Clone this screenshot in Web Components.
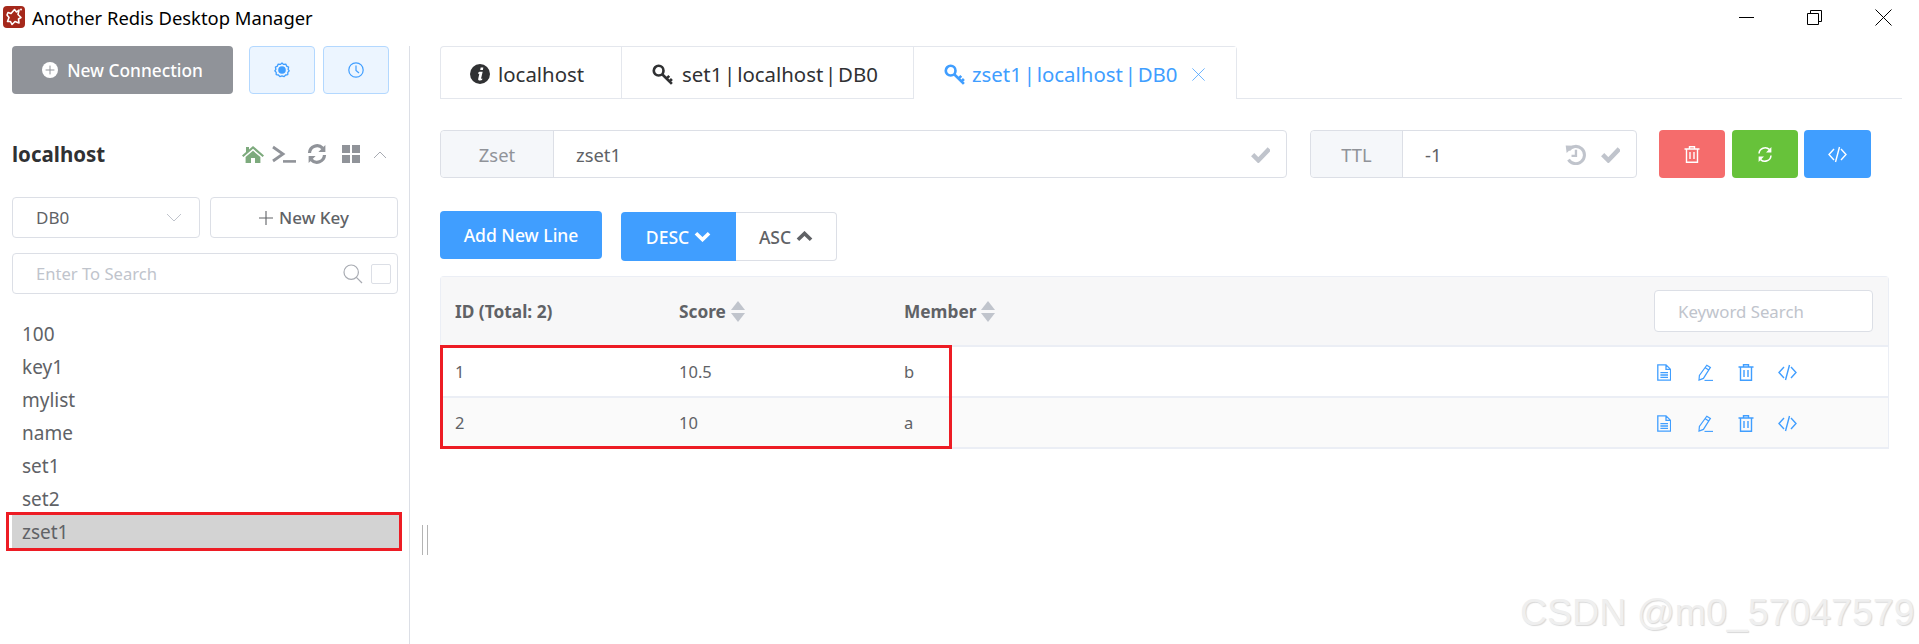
<!DOCTYPE html>
<html>
<head>
<meta charset="utf-8">
<title>Another Redis Desktop Manager</title>
<style>
  html, body { margin: 0; padding: 0; background: #fff; height: 100%; overflow: hidden; }
  body { font-family: "Noto Sans", "Open Sans", sans-serif; color: #606266; }
</style>
</head>
<body>
<app-shell></app-shell>

<script>
const ICONS = {
  logo: '<rect x="0" y="0" width="22" height="22" rx="4" fill="#a5281b"/><path d="M5 6.5 8 7.5 11.5 3.5 13.5 6 16 4 15 8.5 18 11.5 15.5 13 16 17 12 15.5 9 18.5 7.5 15.5 4.5 15.5 6 11.5 4 9Z" fill="none" stroke="#fff" stroke-width="1.6" stroke-linejoin="round"/><circle cx="18" cy="3.5" r="1" fill="#fff"/>',
  plus: '<circle cx="8" cy="8" r="8" fill="#fff"/><path d="M8 3.6v8.8M3.6 8h8.8" stroke="#909399" stroke-width="1"/>',
  gear: '<path d="M8 1.2 9.6 2.6 11.8 2.3 12.6 4.3 14.6 5.3 14.1 7.5 15.2 9 13.8 10.6 13.8 12.8 11.6 13.2 10.1 14.8 8 14.1 5.9 14.8 4.4 13.2 2.2 12.8 2.2 10.6 .8 9 1.9 7.5 1.4 5.3 3.4 4.3 4.2 2.3 6.4 2.6Z" transform="translate(0 -.2)" fill="none" stroke="currentColor" stroke-width="1.3" stroke-linejoin="round"/><circle cx="8" cy="8" r="3.8" fill="currentColor"/>',
  clock: '<circle cx="8" cy="8" r="7.2" fill="none" stroke="currentColor" stroke-width="1.2"/><path d="M8 3.6V8.4L11 11" fill="none" stroke="currentColor" stroke-width="1.2"/>',
  home: '<path d="M11 1 22 10.5 20.6 12 11 3.8 1.4 12 0 10.5 4 7V2h3v2.4Z" fill="currentColor"/><path d="M3.6 12 11 5.8 18.4 12V18H13V13H9V18H3.6Z" fill="currentColor"/>',
  terminal: '<path d="M1 2 11 9 1 16" fill="none" stroke="currentColor" stroke-width="2.8"/><path d="M11 16.4H24" stroke="currentColor" stroke-width="2.6"/>',
  sync: '<path d="M2.5 9A7.6 7.6 0 0 1 15.6 4.2" fill="none" stroke="currentColor" stroke-width="3.2"/><path d="M18.4 1V8H11.4Z" fill="currentColor"/><path d="M17.5 11A7.6 7.6 0 0 1 4.4 15.8" fill="none" stroke="currentColor" stroke-width="3.2"/><path d="M1.6 19V12H8.6Z" fill="currentColor"/>',
  grid: '<path d="M0 0H8V8H0ZM10 0H18V8H10ZM0 10H8V18H0ZM10 10H18V18H10Z" fill="currentColor"/>',
  up: '<path d="M1 8 7 2 13 8" fill="none" stroke="currentColor" stroke-width="1"/>',
  down: '<path d="M1 1 8 8 15 1" fill="none" stroke="currentColor" stroke-width="1"/>',
  add: '<path d="M7 0V14M0 7H14" stroke="currentColor" stroke-width="1.1"/>',
  search: '<circle cx="8.2" cy="8.2" r="7.2" fill="none" stroke="currentColor" stroke-width="1.2"/><path d="M13.4 13.4 19 19" stroke="currentColor" stroke-width="1.2"/>',
  info: '<circle cx="9" cy="9" r="9" fill="currentColor"/><path d="M9.6 3.2h2.4l-.4 2.2H9.2ZM8.6 7h2.8l-1.5 6.2 1.2-.1-.2 1.4c-1.3.4-3.6.6-3.6-.8l1.1-4.9-1 .1.2-1.4Z" fill="#fff"/>',
  key: '<circle cx="6" cy="6" r="4.4" fill="none" stroke="currentColor" stroke-width="2.4"/><path d="M9 9 18 18M13.2 13.2 15.6 10.8M15.8 15.8 18 13.6" fill="none" stroke="currentColor" stroke-width="2.4"/>',
  check: '<path d="M1.4 8 6.2 12.8 15.4 3.2" fill="none" stroke="currentColor" stroke-width="3.8"/>',
  history: '<path d="M3.2 5.2A7.4 7.4 0 1 1 3 13.4" fill="none" stroke="currentColor" stroke-width="2.6"/><path d="M.6 1.2 7.8 1.6 1.4 7.8Z" fill="currentColor"/><path d="M9.4 5V10.2H5.6" fill="none" stroke="currentColor" stroke-width="2"/>',
  trash: '<path d="M5.5 2.5V.8H10.5V2.5M.5 3H15.5M2.5 3V16.2H13.5V3M6 6V13M10 6V13" fill="none" stroke="currentColor" stroke-width="1.4"/>',
  cycle: '<path d="M2 7.5A6.2 6.2 0 0 1 12.4 3.4" fill="none" stroke="currentColor" stroke-width="1.5"/><path d="M14.4 1V6.4H9Z" fill="currentColor"/><path d="M14 9.5A6.2 6.2 0 0 1 3.6 13.6" fill="none" stroke="currentColor" stroke-width="1.5"/><path d="M1.6 16V10.6H7Z" fill="currentColor"/>',
  code: '<path d="M6 3 1 8.5 6 14M13 3 18 8.5 13 14M11.5 1 7.5 16" fill="none" stroke="currentColor" stroke-width="1.4"/>',
  doc: '<path d="M.8.8H9L13.6 5.4V16.2H.8ZM9 .8V5.4H13.6M3.4 8.6H11M3.4 11H11M3.4 13.4H11" fill="none" stroke="currentColor" stroke-width="1.3"/>',
  edit: '<path d="M9.8 1.2 13.4 3.4 6.4 14.4 2 16 2.4 11.4ZM8.2 3.8 11.8 6" fill="none" stroke="currentColor" stroke-width="1.2"/><path d="M7.5 16.4H16" stroke="currentColor" stroke-width="1.1"/>',
  minimize: '<path d="M0 .5H15" stroke="currentColor" stroke-width="1"/>',
  restore: '<path d="M.5 3.5H11.5V14.5H.5ZM3.5 3.5V.5H14.5V11.5H11.5" fill="none" stroke="currentColor" stroke-width="1"/>',
  close: '<path d="M.5.5 16.5 16.5M16.5.5 .5 16.5" stroke="currentColor" stroke-width="1"/>',
  chevDown: '<path d="M1.6 1.8 7 7 12.4 1.8" fill="none" stroke="currentColor" stroke-width="3"/>',
  chevUp: '<path d="M1.6 7.2 7 2 12.4 7.2" fill="none" stroke="currentColor" stroke-width="3"/>'
};

const BOXES = {
  logo: [22, 22], plus: [16, 16], gear: [16, 16], clock: [16, 16], home: [22, 18], terminal: [24, 18],
  sync: [20, 20], grid: [18, 18], up: [14, 9], down: [16, 9], add: [14, 14], search: [20, 20], info: [18, 18],
  key: [19, 19], check: [16, 15], history: [18, 18], trash: [16, 17], cycle: [16, 17], code: [19, 17],
  doc: [14, 17], edit: [16, 17], minimize: [15, 1], restore: [15, 15], close: [17, 17], chevDown: [14, 9], chevUp: [14, 9]
};

class UiIcon extends HTMLElement {
  connectedCallback() {
    const name = this.getAttribute('name');
    const [w, h] = BOXES[name];
    const width = this.getAttribute('w') || w;
    const height = this.getAttribute('h') || h;
    const shadow = this.attachShadow({ mode: 'open' });
    shadow.innerHTML = `
      <style>
        :host { display: inline-flex; flex: none; color: inherit; }
        svg { display: block; }
      </style>
      <svg width="${width}" height="${height}" viewBox="0 0 ${w} ${h}">${ICONS[name]}</svg>
    `;
  }
}

class TitleBar extends HTMLElement {
  constructor() {
    super();
    this.attachShadow({ mode: 'open' }).innerHTML = `
      <style>
        :host { display: flex; align-items: center; height: 46px; padding: 0 27px 12px 3px; box-sizing: border-box; color: #000; }
        .name { margin-left: 7px; font-size: 18.4px; }
        .win { margin-left: auto; display: flex; align-items: center; gap: 53px; }
      </style>
      <ui-icon name="logo"></ui-icon>
      <span class="name">Another Redis Desktop Manager</span>
      <div class="win">
        <ui-icon name="minimize"></ui-icon>
        <ui-icon name="restore"></ui-icon>
        <ui-icon name="close"></ui-icon>
      </div>
    `;
  }
}

class KeyList extends HTMLElement {
  constructor() {
    super();
    this.attachShadow({ mode: 'open' }).innerHTML = `
      <style>
        :host { display: block; margin-top: 23px; margin-right: -1px; }
        .item { height: 33px; line-height: 35px; padding-left: 10px; font-size: 19px; color: #606266; position: relative; }
        .active { background: #d3d3d3; }
        .active::after { content: ""; position: absolute; left: -6px; right: -3px; top: -3px; bottom: -3px; border: 3px solid #ed1c24; box-sizing: border-box; }
      </style>
      ${['100', 'key1', 'mylist', 'name', 'set1', 'set2'].map(k => `<div class="item">${k}</div>`).join('')}
      <div class="item active">zset1</div>
    `;
  }
}

class SideBar extends HTMLElement {
  constructor() {
    super();
    this.attachShadow({ mode: 'open' }).innerHTML = `
      <style>
        :host { display: block; width: 410px; box-sizing: border-box; border-right: 1px solid #dcdfe6; padding-left: 12px; padding-right: 11px; flex: none; font-size: 17px; }
        .top { display: flex; height: 48px; gap: 8px; }
        .new-conn { width: 221px; background: #909399; color: #fff; font-weight: 500; border-radius: 4px; display: flex; align-items: center; justify-content: center; gap: 9px; font-size: 17.3px; margin-right: 8px; }
        .light { width: 66px; background: #ecf5ff; border: 1px solid #b3d8ff; color: #409eff; border-radius: 4px; display: flex; align-items: center; justify-content: center; box-sizing: border-box; }
        .conn { display: flex; align-items: center; height: 42px; margin: 39px 0 22px; }
        .conn b { font-size: 20.5px; color: #303133; font-weight: 700; }
        .ops { margin-left: auto; display: flex; align-items: center; color: #909399; margin-right: 11px; }
        .row { display: flex; gap: 10px; }
        .field { height: 41px; width: 188px; border: 1px solid #dcdfe6; border-radius: 4px; box-sizing: border-box; display: flex; align-items: center; flex: none; }
        .select { padding: 0 17px 0 23px; color: #606266; }
        .select ui-icon { margin-left: auto; color: #c0c4cc; }
        .btn { justify-content: center; gap: 6px; font-weight: 500; color: #606266; }
        .search { width: 386px; margin-top: 15px; padding: 0 6px 0 23px; color: #c0c4cc; font-size: 16.6px; }
        .search ui-icon { margin-left: auto; color: #a8abb2; margin-right: 8px; }
        .cb { width: 20px; height: 20px; border: 1px solid #dcdfe6; border-radius: 2px; box-sizing: border-box; }
      </style>
      <div class="top">
        <div class="new-conn"><ui-icon name="plus"></ui-icon>New Connection</div>
        <div class="light"><ui-icon name="gear"></ui-icon></div>
        <div class="light"><ui-icon name="clock"></ui-icon></div>
      </div>
      <div class="conn">
        <b>localhost</b>
        <div class="ops">
          <ui-icon name="home" style="color:#7daa7d;margin-right:8px"></ui-icon>
          <ui-icon name="terminal" style="margin-right:11px"></ui-icon>
          <ui-icon name="sync" style="margin-right:15px"></ui-icon>
          <ui-icon name="grid" style="margin-right:13px"></ui-icon>
          <ui-icon name="up" style="color:#a8abb2"></ui-icon>
        </div>
      </div>
      <div class="row">
        <div class="field select">DB0<ui-icon name="down"></ui-icon></div>
        <div class="field btn"><ui-icon name="add"></ui-icon>New Key</div>
      </div>
      <div class="field search">Enter To Search<ui-icon name="search"></ui-icon><span class="cb"></span></div>
      <key-list></key-list>
    `;
  }
}

class TabBar extends HTMLElement {
  constructor() {
    super();
    this.attachShadow({ mode: 'open' }).innerHTML = `
      <style>
        :host { display: flex; height: 53px; border-bottom: 1px solid #e4e7ed; box-sizing: border-box; }
        .tabs { display: flex; height: 53px; border: 1px solid #e4e7ed; border-bottom: none; border-radius: 4px 4px 0 0; box-sizing: border-box; }
        .tab { display: flex; align-items: center; gap: 9px; font-size: 20.4px; word-spacing: -3.5px; color: #303133; border-left: 1px solid #e4e7ed; box-sizing: border-box; height: 51px; padding: 3px 0 0 30px; }
        .tab:first-child { border-left: none; padding-left: 29px; gap: 8px; }
        .active { color: #409eff; background: #fff; height: 52px; gap: 7px; padding-top: 2px; }
        .x { margin-left: 7px; color: #409eff; }
      </style>
      <div class="tabs">
        <div class="tab" style="width:180px"><ui-icon name="info" w="20" h="20"></ui-icon>localhost</div>
        <div class="tab" style="width:292px"><ui-icon name="key" w="21" h="21"></ui-icon>set1 | localhost | DB0</div>
        <div class="tab active" style="width:323px"><ui-icon name="key" w="21" h="21"></ui-icon>zset1 | localhost | DB0<ui-icon class="x" name="close" w="13" h="13"></ui-icon></div>
      </div>
    `;
  }
}

class KeyHeader extends HTMLElement {
  constructor() {
    super();
    this.attachShadow({ mode: 'open' }).innerHTML = `
      <style>
        :host { display: flex; height: 48px; margin-top: 31px; margin-right: 31px; font-size: 18.4px; }
        .group { display: flex; border: 1px solid #dcdfe6; border-radius: 4px; box-sizing: border-box; }
        .name-group { flex: 1; margin-right: 23px; }
        .ttl-group { width: 327px; margin-right: 22px; }
        .label { background: #f5f7fa; color: #909399; border-right: 1px solid #dcdfe6; display: flex; align-items: center; justify-content: center; border-radius: 4px 0 0 4px; flex: none; }
        .value { flex: 1; display: flex; align-items: center; padding-left: 22px; color: #606266; }
        .end { margin-left: auto; display: flex; align-items: center; color: #c0c4cc; }
        .act { width: 66px; height: 48px; border-radius: 4px; color: #fff; display: flex; align-items: center; justify-content: center; flex: none; }
      </style>
      <div class="group name-group">
        <div class="label" style="width:112px">Zset</div>
        <div class="value">zset1<div class="end" style="margin-right:16px"><ui-icon name="check" w="19" h="18"></ui-icon></div></div>
      </div>
      <div class="group ttl-group">
        <div class="label" style="width:91px">TTL</div>
        <div class="value">-1<div class="end" style="margin-right:16px;gap:15px"><ui-icon name="history" w="21" h="21"></ui-icon><ui-icon name="check" w="19" h="18"></ui-icon></div></div>
      </div>
      <div class="act" style="background:#f56c6c;margin-right:7px"><ui-icon name="trash"></ui-icon></div>
      <div class="act" style="background:#67c23a;margin-right:6px"><ui-icon name="cycle"></ui-icon></div>
      <div class="act" style="background:#409eff;width:67px"><ui-icon name="code"></ui-icon></div>
    `;
  }
}

class SortBar extends HTMLElement {
  constructor() {
    super();
    this.attachShadow({ mode: 'open' }).innerHTML = `
      <style>
        :host { display: flex; align-items: flex-start; margin-top: 33px; font-size: 17.5px; font-weight: 500; height: 50px; }
        .add { width: 162px; height: 48px; background: #409eff; color: #fff; border-radius: 4px; display: flex; align-items: center; justify-content: center; margin-right: 19px; }
        .seg { display: flex; height: 49px; margin-top: 1px; }
        .seg div { display: flex; align-items: center; justify-content: center; gap: 5px; box-sizing: border-box; }
        .desc { width: 115px; background: #409eff; color: #fff; border-radius: 4px 0 0 4px; }
        .asc { width: 101px; color: #606266; border: 1px solid #dcdfe6; border-left: none; border-radius: 0 4px 4px 0; }
      </style>
      <div class="add">Add New Line</div>
      <div class="seg">
        <div class="desc">DESC<ui-icon name="chevDown" w="17" h="11"></ui-icon></div>
        <div class="asc">ASC<ui-icon name="chevUp" w="17" h="11"></ui-icon></div>
      </div>
    `;
  }
}

class SortCaret extends HTMLElement {
  constructor() {
    super();
    this.attachShadow({ mode: 'open' }).innerHTML = `
      <style>
        :host { display: inline-flex; flex-direction: column; gap: 3px; margin-left: 5px; }
        i { display: block; width: 0; height: 0; border-left: 7.5px solid transparent; border-right: 7.5px solid transparent; }
        .u { border-bottom: 9px solid #c0c4cc; }
        .d { border-top: 9px solid #c0c4cc; }
      </style>
      <i class="u"></i><i class="d"></i>
    `;
  }
}

class TableRow extends HTMLElement {
  constructor() {
    super();
    const alt = this.hasAttribute('alt');
    this.attachShadow({ mode: 'open' }).innerHTML = `
      <style>
        :host { display: grid; grid-template-columns: 224px 225px 1fr 235px; align-items: center; height: 51px; padding-left: 14px; box-sizing: border-box; border-bottom: 2px solid #ebeef5; background: ${alt ? '#fafafa' : '#fff'}; font-size: 16.5px; color: #606266; }
        .ops { display: flex; align-items: center; padding: 1px 0 0 4px; color: #409eff; }
      </style>
      <div>${this.getAttribute('idx')}</div>
      <div>${this.getAttribute('score')}</div>
      <div>${this.getAttribute('member')}</div>
      <div class="ops">
        <ui-icon name="doc" style="margin-right:26px"></ui-icon>
        <ui-icon name="edit" style="margin-right:25px"></ui-icon>
        <ui-icon name="trash" style="margin-right:24px"></ui-icon>
        <ui-icon name="code"></ui-icon>
      </div>
    `;
  }
}

class ZsetTable extends HTMLElement {
  constructor() {
    super();
    this.attachShadow({ mode: 'open' }).innerHTML = `
      <style>
        :host { display: block; position: relative; margin-top: 15px; margin-right: 13px; border: 1px solid #ebeef5; border-bottom: none; border-radius: 4px 4px 0 0; box-sizing: border-box; }
        .head { display: grid; grid-template-columns: 224px 225px 1fr 235px; align-items: center; height: 70px; padding-left: 14px; box-sizing: border-box; background: #f7f7f8; border-bottom: 2px solid #ebeef5; font-size: 17.3px; font-weight: 700; color: #606266; }
        .cell { display: flex; align-items: center; }
        .kw { width: 219px; height: 42px; margin-left: 1px; border: 1px solid #dcdfe6; border-radius: 4px; background: #fff; box-sizing: border-box; display: flex; align-items: center; padding-left: 23px; color: #c0c4cc; font-weight: 400; font-size: 16.8px; }
        .mark { position: absolute; left: -1px; top: 68px; width: 512px; height: 104px; border: 3px solid #ed1c24; box-sizing: border-box; }
      </style>
      <div class="head">
        <div>ID (Total: 2)</div>
        <div class="cell">Score<sort-caret></sort-caret></div>
        <div class="cell">Member<sort-caret></sort-caret></div>
        <div><div class="kw">Keyword Search</div></div>
      </div>
      <table-row idx="1" score="10.5" member="b"></table-row>
      <table-row idx="2" score="10" member="a" alt></table-row>
      <div class="mark"></div>
    `;
  }
}

class AppShell extends HTMLElement {
  constructor() {
    super();
    this.attachShadow({ mode: 'open' }).innerHTML = `
      <style>
        :host { display: flex; flex-direction: column; height: 644px; position: relative; overflow: hidden; }
        .body { display: flex; flex: 1; min-height: 0; }
        .main { flex: 1; padding: 0 17px 0 30px; min-width: 0; }
        .drag { position: absolute; left: 422px; top: 525px; width: 4px; height: 30px; border-left: 1px solid #b4b4b4; border-right: 1px solid #b4b4b4; }
        .wm { position: absolute; left: 1520px; top: 591px; font: 37.5px "Liberation Sans", Arial, sans-serif; color: #efefef; text-shadow: 1px 1px 1px #d8d8d8; white-space: nowrap; }
      </style>
      <title-bar></title-bar>
      <div class="body">
        <side-bar></side-bar>
        <div class="main">
          <tab-bar></tab-bar>
          <key-header></key-header>
          <sort-bar></sort-bar>
          <zset-table></zset-table>
        </div>
      </div>
      <div class="drag"></div>
      <div class="wm">CSDN @m0_57047579</div>
    `;
  }
}

customElements.define('ui-icon', UiIcon);
customElements.define('title-bar', TitleBar);
customElements.define('key-list', KeyList);
customElements.define('side-bar', SideBar);
customElements.define('tab-bar', TabBar);
customElements.define('key-header', KeyHeader);
customElements.define('sort-bar', SortBar);
customElements.define('sort-caret', SortCaret);
customElements.define('table-row', TableRow);
customElements.define('zset-table', ZsetTable);
customElements.define('app-shell', AppShell);
</script>
</body>
</html>
